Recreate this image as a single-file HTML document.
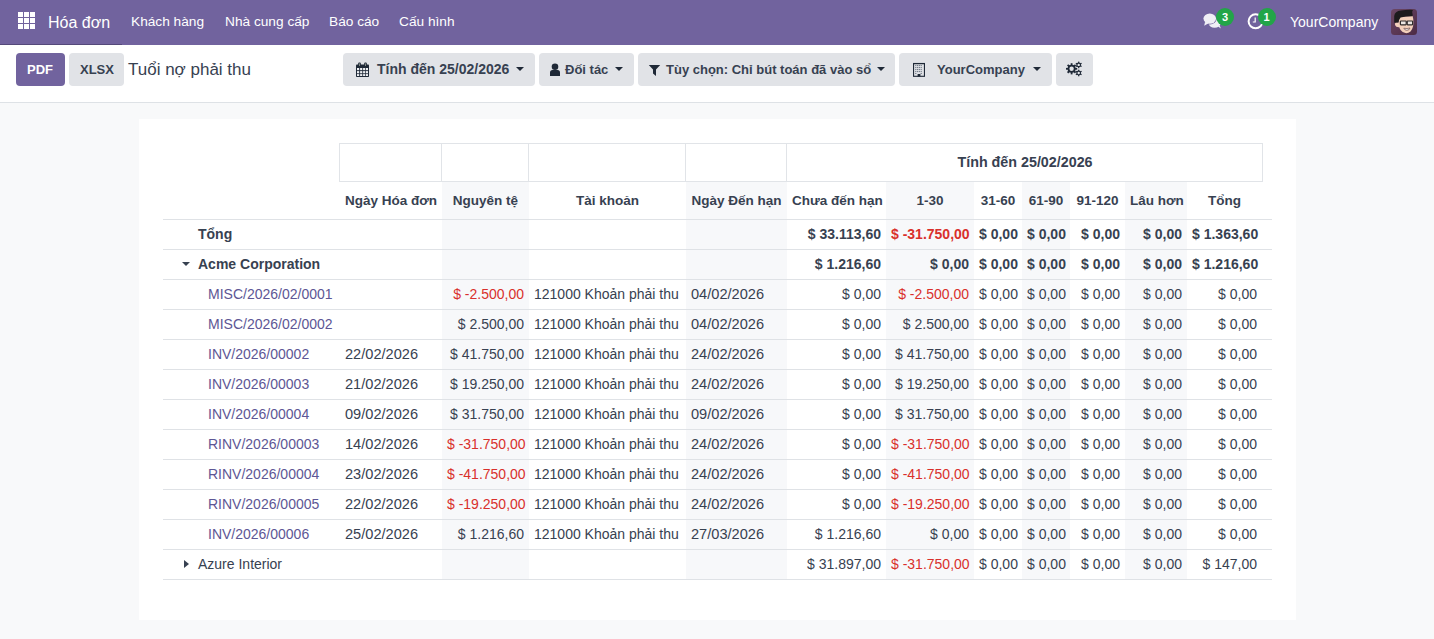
<!DOCTYPE html>
<html><head><meta charset="utf-8">
<style>
*{box-sizing:border-box;margin:0;padding:0}
html,body{width:1434px;height:639px;overflow:hidden;background:#f8f9fa;font-family:"Liberation Sans",sans-serif;color:#374151}
.nav{position:absolute;left:0;top:0;width:1434px;height:45px;background:#71639e}
.nav .t{position:absolute;color:#fff;font-size:14px;line-height:20px;top:12px;white-space:nowrap}
.cp{position:absolute;left:0;top:45px;width:1434px;height:58px;background:#fff;border-bottom:1px solid #dee2e6}
.btn{position:absolute;top:53px;height:33px;border-radius:4px;background:#e1e3e7;font-weight:bold;font-size:13px;color:#374151;white-space:nowrap}
.btn span{position:absolute;top:0;line-height:33px}
.sheet{position:absolute;left:139px;top:119px;width:1157px;height:501px;background:#fff}
.c{position:absolute;white-space:nowrap;font-size:14px;color:#374151;padding:0 5px}
.c.b{font-weight:bold}
.c.hd{font-size:13.5px}
.c.ctr{text-align:center}
.c.rgt{text-align:right}
.c.lft{text-align:left}
.c.neg{color:#d9302c}
.c.link{color:#5d5695;padding:0}
.shade{position:absolute;background:#f7f8fa}
.hb{position:absolute;border:1px solid #e1e4e8}
.vl{position:absolute;width:1px;background:#e1e4e8}
.hl{position:absolute;left:163px;width:1109px;height:1px;background:#dfe2e6}
.caret{position:absolute;top:67px;width:0;height:0;border-left:4px solid transparent;border-right:4px solid transparent;border-top:4px solid #1f2937}
.badge{position:absolute;width:18px;height:18px;border-radius:50%;background:#22a548;color:#fff;font-size:11px;font-weight:bold;text-align:center;line-height:18px}
.caret-d{position:absolute;width:0;height:0;border-left:4.5px solid transparent;border-right:4.5px solid transparent;border-top:4.5px solid #374151}
.caret-r{position:absolute;width:0;height:0;border-top:4px solid transparent;border-bottom:4px solid transparent;border-left:5px solid #374151}
</style></head><body>
<div class="nav"><div style="position:absolute;left:0;top:44px;width:122px;height:1px;background:#54497a"></div>
  <svg style="position:absolute;left:18px;top:12px" width="17" height="17" viewBox="0 0 17 17">
    <g fill="#fff">
      <rect x="0" y="0" width="5" height="5"/><rect x="6" y="0" width="5" height="5"/><rect x="12" y="0" width="5" height="5"/>
      <rect x="0" y="6" width="5" height="5"/><rect x="6" y="6" width="5" height="5"/><rect x="12" y="6" width="5" height="5"/>
      <rect x="0" y="12" width="5" height="5"/><rect x="6" y="12" width="5" height="5"/><rect x="12" y="12" width="5" height="5"/>
    </g>
  </svg>
  <div class="t" style="left:48px;font-size:16px;top:13px">Hóa đơn</div>
  <div class="t" style="left:131px;font-size:13.7px">Khách hàng</div>
  <div class="t" style="left:225px;font-size:13.7px">Nhà cung cấp</div>
  <div class="t" style="left:329px;font-size:13.7px">Báo cáo</div>
  <div class="t" style="left:399px;font-size:13.7px">Cấu hình</div>
  <div class="t" style="left:1290px">YourCompany</div>
</div>
<div class="cp"></div>
<div class="btn" style="left:16px;width:49px;background:#71639e;color:#fff"><span style="left:11px">PDF</span></div>
<div class="btn" style="left:69px;width:55px"><span style="left:11px">XLSX</span></div>
<div style="position:absolute;left:128px;top:58px;font-size:17px;line-height:24px;color:#374151;white-space:nowrap">Tuổi nợ phải thu</div>
<div class="btn" style="left:343px;width:192px"><span style="left:34px;font-size:14px">Tính đến 25/02/2026</span></div>
<div class="btn" style="left:539px;width:95px"><span style="left:26px">Đối tác</span></div>
<div class="btn" style="left:638px;width:257px"><span style="left:28px">Tùy chọn: Chỉ bút toán đã vào sổ</span></div>
<div class="btn" style="left:899px;width:153px"><span style="left:38px">YourCompany</span></div>
<div class="btn" style="left:1056px;width:37px"></div>

<!-- calendar -->
<svg style="position:absolute;left:356px;top:62px" width="13" height="15" viewBox="0 0 13 15">
  <rect x="0" y="2.5" width="13" height="12.5" rx="0.8" fill="#1f2937"/>
  <g fill="#eef0f3">
    <rect x="1" y="6" width="2.2" height="2.2"/><rect x="4.1" y="6" width="2.2" height="2.2"/><rect x="7.1" y="6" width="2.2" height="2.2"/><rect x="10" y="6" width="2" height="2.2"/>
    <rect x="1" y="9.1" width="2.2" height="2.2"/><rect x="4.1" y="9.1" width="2.2" height="2.2"/><rect x="7.1" y="9.1" width="2.2" height="2.2"/><rect x="10" y="9.1" width="2" height="2.2"/>
    <rect x="1" y="12.1" width="2.2" height="1.9"/><rect x="4.1" y="12.1" width="2.2" height="1.9"/><rect x="7.1" y="12.1" width="2.2" height="1.9"/><rect x="10" y="12.1" width="2" height="1.9"/>
  </g>
  <rect x="2.2" y="0.6" width="2.6" height="4" rx="1" fill="#1f2937"/>
  <rect x="8.2" y="0.6" width="2.6" height="4" rx="1" fill="#1f2937"/>
  <rect x="3.2" y="1.4" width="0.7" height="2.6" fill="#a9b3a8"/>
  <rect x="9.2" y="1.4" width="0.7" height="2.6" fill="#a9b3a8"/>
</svg>
<!-- user -->
<svg style="position:absolute;left:549px;top:63px" width="12" height="14" viewBox="0 0 12 14">
  <circle cx="6" cy="3.7" r="3.3" fill="#1f2937"/>
  <path d="M1 13 L1 9.5 Q1 7 3.5 7 L8.5 7 Q11 7 11 9.5 L11 13 Z" fill="#1f2937"/>
</svg>
<!-- filter -->
<svg style="position:absolute;left:648px;top:64px" width="13" height="13" viewBox="0 0 13 13">
  <path d="M0.8 1 L12.2 1 L8 5.6 L8 12 L5 9.4 L5 5.6 Z" fill="#1f2937"/>
</svg>
<!-- building -->
<svg style="position:absolute;left:913px;top:62px" width="12" height="15" viewBox="0 0 12 15">
  <rect x="0.55" y="1.5" width="10.9" height="12.8" fill="none" stroke="#1f2937" stroke-width="1.1"/>
  <rect x="0" y="1" width="12" height="1.2" fill="#1f2937"/>
  <g fill="#5b6575">
    <rect x="2.2" y="3.2" width="1.2" height="0.9"/><rect x="4" y="3.2" width="1.2" height="0.9"/><rect x="5.8" y="3.2" width="1.2" height="0.9"/><rect x="7.6" y="3.2" width="1.2" height="0.9"/>
    <rect x="2.2" y="5.2" width="1.2" height="0.9"/><rect x="4" y="5.2" width="1.2" height="0.9"/><rect x="5.8" y="5.2" width="1.2" height="0.9"/><rect x="7.6" y="5.2" width="1.2" height="0.9"/>
    <rect x="2.2" y="7.2" width="1.2" height="0.9"/><rect x="4" y="7.2" width="1.2" height="0.9"/><rect x="5.8" y="7.2" width="1.2" height="0.9"/><rect x="7.6" y="7.2" width="1.2" height="0.9"/>
    <rect x="2.2" y="9.2" width="1.2" height="0.9"/><rect x="4" y="9.2" width="1.2" height="0.9"/><rect x="5.8" y="9.2" width="1.2" height="0.9"/><rect x="7.6" y="9.2" width="1.2" height="0.9"/>
    <rect x="2.2" y="11" width="1.2" height="0.9"/><rect x="7.6" y="11" width="1.2" height="0.9"/>
  </g>
  <rect x="4.6" y="12" width="2.8" height="2.5" fill="#1f2937"/>
</svg>
<!-- gears -->
<svg style="position:absolute;left:1065px;top:61px" width="18" height="16" viewBox="0 0 18 16">
  <g fill="#1f2937">
    <circle cx="6.6" cy="7.8" r="4"/>
    <g transform="translate(6.6 7.8)">
      <rect x="-0.9" y="-5.6" width="1.8" height="11.2"/>
      <rect x="-0.9" y="-5.6" width="1.8" height="11.2" transform="rotate(45)"/>
      <rect x="-0.9" y="-5.6" width="1.8" height="11.2" transform="rotate(90)"/>
      <rect x="-0.9" y="-5.6" width="1.8" height="11.2" transform="rotate(135)"/>
    </g>
    <circle cx="13.7" cy="3.9" r="2.4"/>
    <g transform="translate(13.7 3.9)">
      <rect x="-0.6" y="-3.3" width="1.2" height="6.6"/>
      <rect x="-0.6" y="-3.3" width="1.2" height="6.6" transform="rotate(60)"/>
      <rect x="-0.6" y="-3.3" width="1.2" height="6.6" transform="rotate(120)"/>
    </g>
    <circle cx="13.7" cy="12" r="2.4"/>
    <g transform="translate(13.7 12)">
      <rect x="-0.6" y="-3.3" width="1.2" height="6.6"/>
      <rect x="-0.6" y="-3.3" width="1.2" height="6.6" transform="rotate(60)"/>
      <rect x="-0.6" y="-3.3" width="1.2" height="6.6" transform="rotate(120)"/>
    </g>
  </g>
  <circle cx="6.6" cy="7.8" r="2.2" fill="#e1e3e7"/>
  <circle cx="13.7" cy="3.9" r="1.2" fill="#e1e3e7"/>
  <circle cx="13.7" cy="12" r="1.2" fill="#e1e3e7"/>
</svg>
<!-- carets -->
<div class="caret" style="left:516px"></div>
<div class="caret" style="left:615px"></div>
<div class="caret" style="left:877px"></div>
<div class="caret" style="left:1033px"></div>
<!-- chat -->
<svg style="position:absolute;left:1202px;top:12px" width="20" height="18" viewBox="0 0 20 18">
  <g fill="#efeef5">
    <ellipse cx="12.6" cy="11.2" rx="6" ry="4.6"/>
    <path d="M16 14.5 L18.9 16.4 L17.6 13.2 Z"/>
  </g>
  <ellipse cx="7.75" cy="6.6" rx="6.9" ry="5.8" fill="#71639e"/>
  <g fill="#efeef5">
    <ellipse cx="7.75" cy="6.6" rx="6.3" ry="5.2"/>
    <path d="M3 10 L2.2 13.7 L6.6 11.2 Z"/>
  </g>
</svg>
<!-- clock -->
<svg style="position:absolute;left:1246px;top:12px" width="19" height="19" viewBox="0 0 19 19">
  <circle cx="9.6" cy="9.3" r="7" fill="none" stroke="#fff" stroke-width="2"/>
  <path d="M9.2 5.6 L9.2 10 L6.8 10" fill="none" stroke="#fff" stroke-width="1.2"/>
</svg>
<div class="badge" style="left:1216px;top:8px">3</div>
<div class="badge" style="left:1257.5px;top:8px">1</div>
<!-- avatar -->
<svg style="position:absolute;left:1391px;top:9px" width="26" height="26" viewBox="0 0 26 26">
  <defs><linearGradient id="ag" x1="0" y1="0" x2="1" y2="1"><stop offset="0" stop-color="#6c4764"/><stop offset="1" stop-color="#4c2b45"/></linearGradient></defs>
  <rect x="0" y="0" width="26" height="26" rx="3.5" fill="url(#ag)"/>
  <path d="M7.6 8 L21.6 7 Q22.6 10 22.4 14 Q22.2 19.5 19.5 22.5 Q17.5 24.3 15.2 24.3 Q11.5 24 9.6 21 Q8.8 19.8 8.3 18.3 Q5 18.6 4 16 Q3.6 13.6 5.4 13.3 L7.4 13.6 Z" fill="#f3d0bb"/>
  <path d="M3.2 13.8 L3.2 7 Q3.8 2.2 10 1.6 Q16 0.6 21.9 0.9 Q21 2.5 21.2 3.6 Q21.9 5.5 21.5 7.3 Q15 7.2 9.6 8.6 Q8 10.5 7.5 13.6 Z" fill="#1d1b1d"/>
  <g fill="#ece6e2" stroke="#2e2b2b" stroke-width="1.2">
    <rect x="9.4" y="12" width="5.8" height="3.8" rx="0.5"/><rect x="16.2" y="12" width="5.4" height="3.8" rx="0.5"/>
  </g>
  <path d="M15.2 13.4 L16.2 13.4" stroke="#2e2b2b" stroke-width="1"/>
  <path d="M12.8 19.2 Q16 20 19 19 Q18.4 21.3 15.8 21.3 Q13.4 21.2 12.8 19.2Z" fill="#f4f0ee" stroke="#5a3a3a" stroke-width="0.6"/>
</svg>
<div class="sheet"></div>
<div class="shade" style="left:442px;top:182px;width:87px;height:397px"></div>
<div class="shade" style="left:686px;top:182px;width:101px;height:397px"></div>
<div class="shade" style="left:886px;top:182px;width:88px;height:397px"></div>
<div class="shade" style="left:1022px;top:182px;width:48px;height:397px"></div>
<div class="shade" style="left:1125px;top:182px;width:62px;height:397px"></div>
<div class="hb" style="left:339px;top:143px;width:924px;height:39px"></div>
<div class="vl" style="left:441px;top:143px;height:39px"></div>
<div class="vl" style="left:528px;top:143px;height:39px"></div>
<div class="vl" style="left:685px;top:143px;height:39px"></div>
<div class="vl" style="left:786px;top:143px;height:39px"></div>
<div class="c ctr b hd" style="left:787px;top:144px;width:476px;height:37px;line-height:37px;font-size:14.3px">Tính đến 25/02/2026</div>
<div class="c ctr b hd" style="left:340px;top:182px;width:102px;height:37px;line-height:37px;">Ngày Hóa đơn</div>
<div class="c ctr b hd" style="left:442px;top:182px;width:87px;height:37px;line-height:37px;">Nguyên tệ</div>
<div class="c ctr b hd" style="left:529px;top:182px;width:157px;height:37px;line-height:37px;">Tài khoản</div>
<div class="c ctr b hd" style="left:686px;top:182px;width:101px;height:37px;line-height:37px;">Ngày Đến hạn</div>
<div class="c ctr b hd" style="left:787px;top:182px;width:99px;height:37px;line-height:37px;">Chưa đến hạn</div>
<div class="c ctr b hd" style="left:886px;top:182px;width:88px;height:37px;line-height:37px;">1-30</div>
<div class="c ctr b hd" style="left:974px;top:182px;width:48px;height:37px;line-height:37px;">31-60</div>
<div class="c ctr b hd" style="left:1022px;top:182px;width:48px;height:37px;line-height:37px;">61-90</div>
<div class="c ctr b hd" style="left:1070px;top:182px;width:55px;height:37px;line-height:37px;">91-120</div>
<div class="c ctr b hd" style="left:1125px;top:182px;width:62px;height:37px;line-height:37px;">Lâu hơn</div>
<div class="c ctr b hd" style="left:1187px;top:182px;width:75px;height:37px;line-height:37px;">Tổng</div>
<div class="hl" style="top:219px"></div>
<div class="hl" style="top:249px"></div>
<div class="hl" style="top:279px"></div>
<div class="hl" style="top:309px"></div>
<div class="hl" style="top:339px"></div>
<div class="hl" style="top:369px"></div>
<div class="hl" style="top:399px"></div>
<div class="hl" style="top:429px"></div>
<div class="hl" style="top:459px"></div>
<div class="hl" style="top:489px"></div>
<div class="hl" style="top:519px"></div>
<div class="hl" style="top:549px"></div>
<div class="hl" style="top:579px"></div>
<div class="c b" style="padding:0;left:198px;top:220px;height:29px;line-height:29px">Tổng</div>
<div class="c rgt b" style="left:787px;top:220px;width:99px;height:29px;line-height:29px;">$ 33.113,60</div>
<div class="c rgt b neg" style="left:886px;top:220px;width:88px;height:29px;line-height:29px;">$ -31.750,00</div>
<div class="c rgt b" style="left:974px;top:220px;width:48px;height:29px;line-height:29px;">$ 0,00</div>
<div class="c rgt b" style="left:1022px;top:220px;width:48px;height:29px;line-height:29px;">$ 0,00</div>
<div class="c rgt b" style="left:1070px;top:220px;width:55px;height:29px;line-height:29px;">$ 0,00</div>
<div class="c rgt b" style="left:1125px;top:220px;width:62px;height:29px;line-height:29px;">$ 0,00</div>
<div class="c rgt b" style="left:1187px;top:220px;width:75px;height:29px;line-height:29px;">$ 1.363,60</div>
<div class="caret-d" style="left:182px;top:262px"></div>
<div class="c b" style="padding:0;left:198px;top:250px;height:29px;line-height:29px">Acme Corporation</div>
<div class="c rgt b" style="left:787px;top:250px;width:99px;height:29px;line-height:29px;">$ 1.216,60</div>
<div class="c rgt b" style="left:886px;top:250px;width:88px;height:29px;line-height:29px;">$ 0,00</div>
<div class="c rgt b" style="left:974px;top:250px;width:48px;height:29px;line-height:29px;">$ 0,00</div>
<div class="c rgt b" style="left:1022px;top:250px;width:48px;height:29px;line-height:29px;">$ 0,00</div>
<div class="c rgt b" style="left:1070px;top:250px;width:55px;height:29px;line-height:29px;">$ 0,00</div>
<div class="c rgt b" style="left:1125px;top:250px;width:62px;height:29px;line-height:29px;">$ 0,00</div>
<div class="c rgt b" style="left:1187px;top:250px;width:75px;height:29px;line-height:29px;">$ 1.216,60</div>
<div class="c link" style="left:208px;top:280px;height:29px;line-height:29px">MISC/2026/02/0001</div>
<div class="c rgt  neg" style="left:442px;top:280px;width:87px;height:29px;line-height:29px;">$ -2.500,00</div>
<div class="c lft " style="left:529px;top:280px;width:157px;height:29px;line-height:29px;">121000 Khoản phải thu</div>
<div class="c lft " style="left:686px;top:280px;width:101px;height:29px;line-height:29px;font-size:14.6px;">04/02/2026</div>
<div class="c rgt " style="left:787px;top:280px;width:99px;height:29px;line-height:29px;">$ 0,00</div>
<div class="c rgt  neg" style="left:886px;top:280px;width:88px;height:29px;line-height:29px;">$ -2.500,00</div>
<div class="c rgt " style="left:974px;top:280px;width:48px;height:29px;line-height:29px;">$ 0,00</div>
<div class="c rgt " style="left:1022px;top:280px;width:48px;height:29px;line-height:29px;">$ 0,00</div>
<div class="c rgt " style="left:1070px;top:280px;width:55px;height:29px;line-height:29px;">$ 0,00</div>
<div class="c rgt " style="left:1125px;top:280px;width:62px;height:29px;line-height:29px;">$ 0,00</div>
<div class="c rgt " style="left:1187px;top:280px;width:75px;height:29px;line-height:29px;">$ 0,00</div>
<div class="c link" style="left:208px;top:310px;height:29px;line-height:29px">MISC/2026/02/0002</div>
<div class="c rgt " style="left:442px;top:310px;width:87px;height:29px;line-height:29px;">$ 2.500,00</div>
<div class="c lft " style="left:529px;top:310px;width:157px;height:29px;line-height:29px;">121000 Khoản phải thu</div>
<div class="c lft " style="left:686px;top:310px;width:101px;height:29px;line-height:29px;font-size:14.6px;">04/02/2026</div>
<div class="c rgt " style="left:787px;top:310px;width:99px;height:29px;line-height:29px;">$ 0,00</div>
<div class="c rgt " style="left:886px;top:310px;width:88px;height:29px;line-height:29px;">$ 2.500,00</div>
<div class="c rgt " style="left:974px;top:310px;width:48px;height:29px;line-height:29px;">$ 0,00</div>
<div class="c rgt " style="left:1022px;top:310px;width:48px;height:29px;line-height:29px;">$ 0,00</div>
<div class="c rgt " style="left:1070px;top:310px;width:55px;height:29px;line-height:29px;">$ 0,00</div>
<div class="c rgt " style="left:1125px;top:310px;width:62px;height:29px;line-height:29px;">$ 0,00</div>
<div class="c rgt " style="left:1187px;top:310px;width:75px;height:29px;line-height:29px;">$ 0,00</div>
<div class="c link" style="left:208px;top:340px;height:29px;line-height:29px">INV/2026/00002</div>
<div class="c lft " style="left:340px;top:340px;width:102px;height:29px;line-height:29px;font-size:14.6px;">22/02/2026</div>
<div class="c rgt " style="left:442px;top:340px;width:87px;height:29px;line-height:29px;">$ 41.750,00</div>
<div class="c lft " style="left:529px;top:340px;width:157px;height:29px;line-height:29px;">121000 Khoản phải thu</div>
<div class="c lft " style="left:686px;top:340px;width:101px;height:29px;line-height:29px;font-size:14.6px;">24/02/2026</div>
<div class="c rgt " style="left:787px;top:340px;width:99px;height:29px;line-height:29px;">$ 0,00</div>
<div class="c rgt " style="left:886px;top:340px;width:88px;height:29px;line-height:29px;">$ 41.750,00</div>
<div class="c rgt " style="left:974px;top:340px;width:48px;height:29px;line-height:29px;">$ 0,00</div>
<div class="c rgt " style="left:1022px;top:340px;width:48px;height:29px;line-height:29px;">$ 0,00</div>
<div class="c rgt " style="left:1070px;top:340px;width:55px;height:29px;line-height:29px;">$ 0,00</div>
<div class="c rgt " style="left:1125px;top:340px;width:62px;height:29px;line-height:29px;">$ 0,00</div>
<div class="c rgt " style="left:1187px;top:340px;width:75px;height:29px;line-height:29px;">$ 0,00</div>
<div class="c link" style="left:208px;top:370px;height:29px;line-height:29px">INV/2026/00003</div>
<div class="c lft " style="left:340px;top:370px;width:102px;height:29px;line-height:29px;font-size:14.6px;">21/02/2026</div>
<div class="c rgt " style="left:442px;top:370px;width:87px;height:29px;line-height:29px;">$ 19.250,00</div>
<div class="c lft " style="left:529px;top:370px;width:157px;height:29px;line-height:29px;">121000 Khoản phải thu</div>
<div class="c lft " style="left:686px;top:370px;width:101px;height:29px;line-height:29px;font-size:14.6px;">24/02/2026</div>
<div class="c rgt " style="left:787px;top:370px;width:99px;height:29px;line-height:29px;">$ 0,00</div>
<div class="c rgt " style="left:886px;top:370px;width:88px;height:29px;line-height:29px;">$ 19.250,00</div>
<div class="c rgt " style="left:974px;top:370px;width:48px;height:29px;line-height:29px;">$ 0,00</div>
<div class="c rgt " style="left:1022px;top:370px;width:48px;height:29px;line-height:29px;">$ 0,00</div>
<div class="c rgt " style="left:1070px;top:370px;width:55px;height:29px;line-height:29px;">$ 0,00</div>
<div class="c rgt " style="left:1125px;top:370px;width:62px;height:29px;line-height:29px;">$ 0,00</div>
<div class="c rgt " style="left:1187px;top:370px;width:75px;height:29px;line-height:29px;">$ 0,00</div>
<div class="c link" style="left:208px;top:400px;height:29px;line-height:29px">INV/2026/00004</div>
<div class="c lft " style="left:340px;top:400px;width:102px;height:29px;line-height:29px;font-size:14.6px;">09/02/2026</div>
<div class="c rgt " style="left:442px;top:400px;width:87px;height:29px;line-height:29px;">$ 31.750,00</div>
<div class="c lft " style="left:529px;top:400px;width:157px;height:29px;line-height:29px;">121000 Khoản phải thu</div>
<div class="c lft " style="left:686px;top:400px;width:101px;height:29px;line-height:29px;font-size:14.6px;">09/02/2026</div>
<div class="c rgt " style="left:787px;top:400px;width:99px;height:29px;line-height:29px;">$ 0,00</div>
<div class="c rgt " style="left:886px;top:400px;width:88px;height:29px;line-height:29px;">$ 31.750,00</div>
<div class="c rgt " style="left:974px;top:400px;width:48px;height:29px;line-height:29px;">$ 0,00</div>
<div class="c rgt " style="left:1022px;top:400px;width:48px;height:29px;line-height:29px;">$ 0,00</div>
<div class="c rgt " style="left:1070px;top:400px;width:55px;height:29px;line-height:29px;">$ 0,00</div>
<div class="c rgt " style="left:1125px;top:400px;width:62px;height:29px;line-height:29px;">$ 0,00</div>
<div class="c rgt " style="left:1187px;top:400px;width:75px;height:29px;line-height:29px;">$ 0,00</div>
<div class="c link" style="left:208px;top:430px;height:29px;line-height:29px">RINV/2026/00003</div>
<div class="c lft " style="left:340px;top:430px;width:102px;height:29px;line-height:29px;font-size:14.6px;">14/02/2026</div>
<div class="c rgt  neg" style="left:442px;top:430px;width:87px;height:29px;line-height:29px;">$ -31.750,00</div>
<div class="c lft " style="left:529px;top:430px;width:157px;height:29px;line-height:29px;">121000 Khoản phải thu</div>
<div class="c lft " style="left:686px;top:430px;width:101px;height:29px;line-height:29px;font-size:14.6px;">24/02/2026</div>
<div class="c rgt " style="left:787px;top:430px;width:99px;height:29px;line-height:29px;">$ 0,00</div>
<div class="c rgt  neg" style="left:886px;top:430px;width:88px;height:29px;line-height:29px;">$ -31.750,00</div>
<div class="c rgt " style="left:974px;top:430px;width:48px;height:29px;line-height:29px;">$ 0,00</div>
<div class="c rgt " style="left:1022px;top:430px;width:48px;height:29px;line-height:29px;">$ 0,00</div>
<div class="c rgt " style="left:1070px;top:430px;width:55px;height:29px;line-height:29px;">$ 0,00</div>
<div class="c rgt " style="left:1125px;top:430px;width:62px;height:29px;line-height:29px;">$ 0,00</div>
<div class="c rgt " style="left:1187px;top:430px;width:75px;height:29px;line-height:29px;">$ 0,00</div>
<div class="c link" style="left:208px;top:460px;height:29px;line-height:29px">RINV/2026/00004</div>
<div class="c lft " style="left:340px;top:460px;width:102px;height:29px;line-height:29px;font-size:14.6px;">23/02/2026</div>
<div class="c rgt  neg" style="left:442px;top:460px;width:87px;height:29px;line-height:29px;">$ -41.750,00</div>
<div class="c lft " style="left:529px;top:460px;width:157px;height:29px;line-height:29px;">121000 Khoản phải thu</div>
<div class="c lft " style="left:686px;top:460px;width:101px;height:29px;line-height:29px;font-size:14.6px;">24/02/2026</div>
<div class="c rgt " style="left:787px;top:460px;width:99px;height:29px;line-height:29px;">$ 0,00</div>
<div class="c rgt  neg" style="left:886px;top:460px;width:88px;height:29px;line-height:29px;">$ -41.750,00</div>
<div class="c rgt " style="left:974px;top:460px;width:48px;height:29px;line-height:29px;">$ 0,00</div>
<div class="c rgt " style="left:1022px;top:460px;width:48px;height:29px;line-height:29px;">$ 0,00</div>
<div class="c rgt " style="left:1070px;top:460px;width:55px;height:29px;line-height:29px;">$ 0,00</div>
<div class="c rgt " style="left:1125px;top:460px;width:62px;height:29px;line-height:29px;">$ 0,00</div>
<div class="c rgt " style="left:1187px;top:460px;width:75px;height:29px;line-height:29px;">$ 0,00</div>
<div class="c link" style="left:208px;top:490px;height:29px;line-height:29px">RINV/2026/00005</div>
<div class="c lft " style="left:340px;top:490px;width:102px;height:29px;line-height:29px;font-size:14.6px;">22/02/2026</div>
<div class="c rgt  neg" style="left:442px;top:490px;width:87px;height:29px;line-height:29px;">$ -19.250,00</div>
<div class="c lft " style="left:529px;top:490px;width:157px;height:29px;line-height:29px;">121000 Khoản phải thu</div>
<div class="c lft " style="left:686px;top:490px;width:101px;height:29px;line-height:29px;font-size:14.6px;">24/02/2026</div>
<div class="c rgt " style="left:787px;top:490px;width:99px;height:29px;line-height:29px;">$ 0,00</div>
<div class="c rgt  neg" style="left:886px;top:490px;width:88px;height:29px;line-height:29px;">$ -19.250,00</div>
<div class="c rgt " style="left:974px;top:490px;width:48px;height:29px;line-height:29px;">$ 0,00</div>
<div class="c rgt " style="left:1022px;top:490px;width:48px;height:29px;line-height:29px;">$ 0,00</div>
<div class="c rgt " style="left:1070px;top:490px;width:55px;height:29px;line-height:29px;">$ 0,00</div>
<div class="c rgt " style="left:1125px;top:490px;width:62px;height:29px;line-height:29px;">$ 0,00</div>
<div class="c rgt " style="left:1187px;top:490px;width:75px;height:29px;line-height:29px;">$ 0,00</div>
<div class="c link" style="left:208px;top:520px;height:29px;line-height:29px">INV/2026/00006</div>
<div class="c lft " style="left:340px;top:520px;width:102px;height:29px;line-height:29px;font-size:14.6px;">25/02/2026</div>
<div class="c rgt " style="left:442px;top:520px;width:87px;height:29px;line-height:29px;">$ 1.216,60</div>
<div class="c lft " style="left:529px;top:520px;width:157px;height:29px;line-height:29px;">121000 Khoản phải thu</div>
<div class="c lft " style="left:686px;top:520px;width:101px;height:29px;line-height:29px;font-size:14.6px;">27/03/2026</div>
<div class="c rgt " style="left:787px;top:520px;width:99px;height:29px;line-height:29px;">$ 1.216,60</div>
<div class="c rgt " style="left:886px;top:520px;width:88px;height:29px;line-height:29px;">$ 0,00</div>
<div class="c rgt " style="left:974px;top:520px;width:48px;height:29px;line-height:29px;">$ 0,00</div>
<div class="c rgt " style="left:1022px;top:520px;width:48px;height:29px;line-height:29px;">$ 0,00</div>
<div class="c rgt " style="left:1070px;top:520px;width:55px;height:29px;line-height:29px;">$ 0,00</div>
<div class="c rgt " style="left:1125px;top:520px;width:62px;height:29px;line-height:29px;">$ 0,00</div>
<div class="c rgt " style="left:1187px;top:520px;width:75px;height:29px;line-height:29px;">$ 0,00</div>
<div class="caret-r" style="left:184px;top:560px"></div>
<div class="c" style="padding:0;left:198px;top:550px;height:29px;line-height:29px">Azure Interior</div>
<div class="c rgt " style="left:787px;top:550px;width:99px;height:29px;line-height:29px;">$ 31.897,00</div>
<div class="c rgt  neg" style="left:886px;top:550px;width:88px;height:29px;line-height:29px;">$ -31.750,00</div>
<div class="c rgt " style="left:974px;top:550px;width:48px;height:29px;line-height:29px;">$ 0,00</div>
<div class="c rgt " style="left:1022px;top:550px;width:48px;height:29px;line-height:29px;">$ 0,00</div>
<div class="c rgt " style="left:1070px;top:550px;width:55px;height:29px;line-height:29px;">$ 0,00</div>
<div class="c rgt " style="left:1125px;top:550px;width:62px;height:29px;line-height:29px;">$ 0,00</div>
<div class="c rgt " style="left:1187px;top:550px;width:75px;height:29px;line-height:29px;">$ 147,00</div>
</body></html>
